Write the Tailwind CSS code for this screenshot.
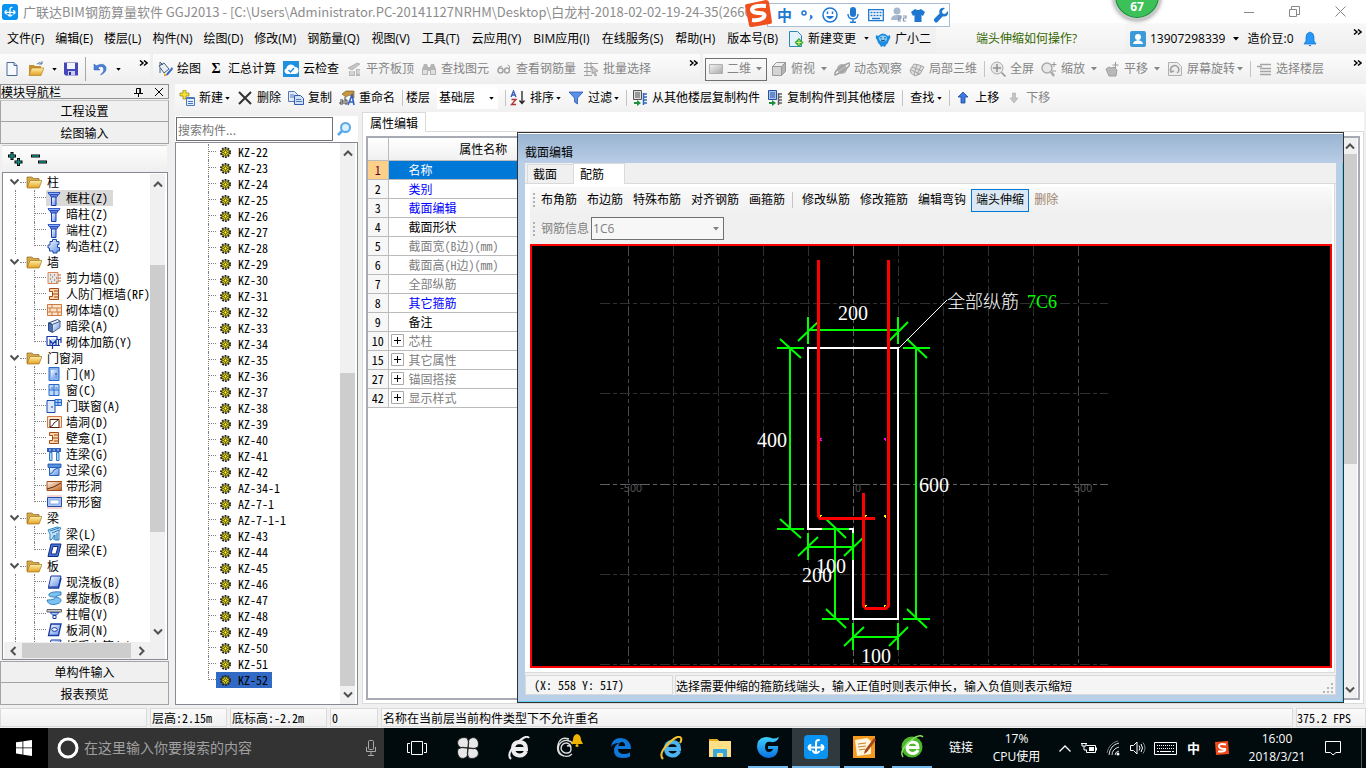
<!DOCTYPE html>
<html lang="zh-CN">
<head>
    <meta charset="UTF-8">
    <title>广联达BIM钢筋算量软件 GGJ2013</title>
    <meta name="viewport" content="width=device-width, initial-scale=1">
    <script src="https://cdn.jsdelivr.net/npm/@tailwindcss/browser@4"></script>
</head>
<body class="h-screen flex flex-col overflow-hidden relative bg-[#f0f0f0] text-black text-xs leading-4 whitespace-nowrap font-['Open_Sans','Noto_Sans_CJK_SC',sans-serif]">

<!-- icon sprites -->
<svg class="absolute w-0 h-0" aria-hidden="true">
    <defs>
        <linearGradient id="gBlue" x1="0" y1="0" x2="1" y2="1"><stop offset="0" stop-color="#fff"/><stop offset="1" stop-color="#5d8fe8"/></linearGradient>
        <linearGradient id="gGold" x1="0" y1="0" x2="0" y2="1"><stop offset="0" stop-color="#fff0a8"/><stop offset="1" stop-color="#e0a020"/></linearGradient>
        <linearGradient id="gBrown" x1="0" y1="0" x2="1" y2="1"><stop offset="0" stop-color="#fff3e4"/><stop offset="1" stop-color="#c06020"/></linearGradient>
        <linearGradient id="gGray" x1="0" y1="0" x2="1" y2="1"><stop offset="0" stop-color="#f4f4f4"/><stop offset="1" stop-color="#a8a8a8"/></linearGradient>
        <linearGradient id="gG" x1="0" y1="0" x2="0" y2="1"><stop offset="0" stop-color="#3fd0ff"/><stop offset="1" stop-color="#0a70e0"/></linearGradient>
    </defs>
    <symbol id="i-logo" viewBox="0 0 24 24"><rect width="24" height="24" rx="4" fill="#0b93f2"/><path d="M12 18V8q0-3 3-3M12 18q-2 0-3-2M4.500 12.500h15M6.500 10q-2 1-2 2.500t2 2.500M17.500 10q2 1 2 2.500t-2 2.500M12 18q2 0 3-1.500" fill="none" stroke="#fff" stroke-width="2" stroke-linecap="round"/></symbol>
    <symbol id="i-down" viewBox="0 0 6 4"><path d="M0 0h6L3 3.500z" fill="currentColor"/></symbol>
    <symbol id="i-more" viewBox="0 0 9 7"><path d="M1 0.500l3 2.500-3 2.500M5 0.500l3 2.500-3 2.500" fill="none" stroke="#000" stroke-width="1.500"/></symbol>
    <symbol id="i-chev" viewBox="0 0 10 8"><path d="M1 1.500l4 4 4-4" fill="none" stroke="#505050" stroke-width="2"/></symbol>
    <symbol id="i-new" viewBox="0 0 16 16"><path d="M3 1.500h7l3 3v10H3z" fill="#f6f9ff" stroke="#4a6a96"/><path d="M10 1.500v3h3" fill="#c7d8f0" stroke="#4a6a96"/></symbol>
    <symbol id="i-open" viewBox="0 0 16 16"><path d="M1 4h5l1 1h6v9H1z" fill="#c89030"/><path d="M3.500 7H16l-3 7.500H1z" fill="url(#gGold)" stroke="#a87818" stroke-width=".6"/><path d="M9 3q3-3 5 0M14 0v3h-3" fill="none" stroke="#5878a8"/></symbol>
    <symbol id="i-save" viewBox="0 0 16 16"><path d="M1 1.500h14v13H2.500L1 13z" fill="#4648b8"/><path d="M4 2h8v6H4z" fill="#f2f4ff"/><path d="M5 10h7v4.500H5z" fill="#c8ccf0"/><path d="M6 11h2v3H6z" fill="#303090"/></symbol>
    <symbol id="i-undo" viewBox="0 0 16 16"><path d="M2 3v6h6L5.800 6.800Q10 4 11.500 7T8.500 14Q15 11 14 6.500 12 1 4.200 4.800z" fill="#4a7fd8" stroke="#2c5cb0" stroke-width=".5"/></symbol>
    <symbol id="i-paint" viewBox="0 0 16 16"><path d="M2 5l5-3 5 6-5 4z" fill="#e8eef8" stroke="#48607c"/><path d="M3 5V1l3 3M3 7v5" fill="none" stroke="#48607c"/><path d="M15 6l-5 6-2 3 3-1 5-6z" fill="#3a68c8"/><path d="M7 12l3 2-3 1.500z" fill="#e8b020"/></symbol>
    <symbol id="i-cloud" viewBox="0 0 16 16"><rect width="16" height="16" fill="#1f8fe0"/><path d="M4 13a3 3 0 0 1-.5-5.800A4.500 4.500 0 0 1 12 6a3.500 3.500 0 0 1 0 7z" fill="#fff"/><path d="M5.500 9l2 2 3.500-4" fill="none" stroke="#1f8fe0" stroke-width="1.400"/></symbol>
    <symbol id="i-flat" viewBox="0 0 16 16"><path d="M2 7l9-5 3 1-8 6z" fill="#c4c4c4" stroke="#a0a0a0" stroke-width=".6"/><path d="M3 10h6v5H3zM10 8h4v7h-4z" fill="#b8b8b8"/><path d="M4 11h4M4 13h4M11 10h3M11 12h3" stroke="#eee"/></symbol>
    <symbol id="i-find" viewBox="0 0 16 16"><path d="M3 3h3l1 3v8H1V8zM10 3h3l2 5v6H9V6z" fill="#b4b4b4"/><path d="M6 6h4v4H6z" fill="#b4b4b4"/><path d="M2 9h4v4H2zM10 9h4v4h-4z" fill="#e0e0e0"/></symbol>
    <symbol id="i-glass" viewBox="0 0 16 16"><circle cx="4.500" cy="9.500" r="2.500" fill="none" stroke="#a4a4a4" stroke-width="1.500"/><circle cx="11" cy="9.500" r="2.500" fill="none" stroke="#a4a4a4" stroke-width="1.500"/><path d="M2 9q0-4 4-4M13.500 9V5l-2-1" fill="none" stroke="#a4a4a4"/></symbol>
    <symbol id="i-batch" viewBox="0 0 16 16"><path d="M1 2.500h14M1 6.500h9M1 10.500h7M1 14.500h8M4 1v14M8 1v8" stroke="#a0a0a0" fill="none"/><path d="M9 5l6 5-3 .5 1.500 4-1.500.5L10.500 11 9 13z" fill="#ccc" stroke="#909090" stroke-width=".7"/></symbol>
    <symbol id="i-rect" viewBox="0 0 16 16"><path d="M1.500 3.500h13v9h-13z" fill="url(#gGray)" stroke="#b0b0b0"/></symbol>
    <symbol id="i-cube" viewBox="0 0 16 16"><path d="M1.500 5.500h9v9h-9z" fill="#d4d4d4" stroke="#999"/><path d="M1.500 5.500l4-4h9l-4 4z" fill="#eee" stroke="#999"/><path d="M10.500 5.500l4-4v9l-4 4z" fill="#b4b4b4" stroke="#999"/></symbol>
    <symbol id="i-orbit" viewBox="0 0 16 16"><circle cx="8" cy="8" r="5" fill="#b4b4b4"/><path d="M1 14Q0 10 7 6t9-4q0 4-7 8T1 14z" fill="none" stroke="#a0a0a0" stroke-width="1.500"/></symbol>
    <symbol id="i-local" viewBox="0 0 16 16"><path d="M1 9l4-6 5 1 5 2-4 7-5 2-4-3z" fill="#e0e0e0" stroke="#a4a4a4"/><path d="M3 6l10 4M2 9l9 4M8 3L5 14M12 5L8 14" stroke="#a4a4a4" fill="none"/></symbol>
    <symbol id="i-full" viewBox="0 0 16 16"><circle cx="7" cy="7" r="6" fill="#e8e8e8" stroke="#aaa"/><path d="M7 3v8M3 7h8M11.500 11.500l4 4" stroke="#909090" stroke-width="1.500"/></symbol>
    <symbol id="i-zoom" viewBox="0 0 16 16"><circle cx="6" cy="7" r="5" fill="#e8e8e8" stroke="#aaa" stroke-width="1.500"/><path d="M10 11l3 4" stroke="#aaa" stroke-width="2.500"/><path d="M13 1v5M10.500 3.500h5M11 10h4" stroke="#999"/></symbol>
    <symbol id="i-pan" viewBox="0 0 16 16"><path d="M2 8l3-2 2 1 3-1 3 3-1 6H5z" fill="#b8b8b8" stroke="#a0a0a0"/><path d="M11.500 1v6M8.500 4h6" stroke="#999"/></symbol>
    <symbol id="i-spin" viewBox="0 0 16 16"><path d="M1.500 1.500h9l4 4v9h-13z" fill="#eee" stroke="#b0b0b0"/><path d="M4 10a4 4 0 1 1 6 2M3 8l1 3 3-1" fill="none" stroke="#a0a0a0" stroke-width="1.500"/></symbol>
    <symbol id="i-floor" viewBox="0 0 16 16"><path d="M4 3.500h11M4 7.500h11M4 10.500h11M4 13.500h11M1 5.500h5" stroke="#a4a4a4" stroke-width="1.600"/></symbol>
    <symbol id="i-add" viewBox="0 0 16 16"><path d="M4 0h3v3h3v3H7v3H4V6H1V3h3z" fill="#f4e030" stroke="#807010" stroke-width=".6"/><path d="M7.500 7.500h8v8h-8z" fill="#e4eefc" stroke="#4878c0"/><path d="M7.500 8.500h8M9 11.500h5M9 13.500h5" stroke="#4878c0"/></symbol>
    <symbol id="i-x" viewBox="0 0 16 16"><path d="M2 2l12 12M14 2L2 14" stroke="#333" stroke-width="2"/></symbol>
    <symbol id="i-copy" viewBox="0 0 16 16"><path d="M.5 1.500h6l3 3v7h-9z" fill="#dfeafa" stroke="#5878b0"/><path d="M6.500 5.500h6l3 3v6h-9z" fill="#cfe0fa" stroke="#3058b0"/><path d="M2 5h4M2 7h4M8 9.500h5M8 11.500h6" stroke="#5878b0"/></symbol>
    <symbol id="i-ren" viewBox="0 0 16 16"><path d="M3 4l4-3h8v7l-5-3-3 2z" fill="#c89840" stroke="#705010" stroke-width=".6"/><path d="M9 15l4-10 2 10M10 12h5" stroke="#3060c0" stroke-width="1.600" fill="none"/><path d="M1 10h3v4H1v-2h3M6 7v7h2v-4H6" stroke="#444" fill="none"/></symbol>
    <symbol id="i-sort" viewBox="0 0 16 16"><path d="M1 7l2.500-6L6 7M2 5h3" stroke="#3858b8" stroke-width="1.300" fill="none"/><path d="M1.500 9.500H6L1.500 14.500H6" stroke="#b03030" stroke-width="1.300" fill="none"/><path d="M12 1v12M9.500 10.500L12 13.500l2.500-3" stroke="#222" stroke-width="1.300" fill="none"/></symbol>
    <symbol id="i-filter" viewBox="0 0 16 16"><path d="M1 2h14L9.500 8v6L6.500 12V8z" fill="#5a90e8" stroke="#2858b0" stroke-width=".8"/></symbol>
    <symbol id="i-from" viewBox="0 0 16 16"><path d="M1.500.5h8v9h-8z" fill="#ddd" stroke="#555"/><path d="M3 3h5M3 5h5M3 7h5" stroke="#555"/><path d="M11 4h4M11 7h4M11 10h4M11 13h4M11.500 3v12" stroke="#3068b8" stroke-width="1.500"/><path d="M2 12h3V10l4 3-4 3v-2H2z" fill="#209040"/></symbol>
    <symbol id="i-to" viewBox="0 0 16 16"><path d="M1.500.5h8v9h-8z" fill="#a8c4f0" stroke="#2850a0"/><path d="M3 3h5M3 5h5M3 7h5" stroke="#2850a0"/><path d="M11 4h4M11 7h4M11 10h4M11 13h4M11.500 3v12" stroke="#606060" stroke-width="1.500"/><path d="M2 12h3V10l4 3-4 3v-2H2z" fill="#209040"/></symbol>
    <symbol id="i-up" viewBox="0 0 16 16"><path d="M8 2l5 5h-3v6H6V7H3z" fill="#3c78e0" stroke="#1c48a0" stroke-width=".8"/></symbol>
    <symbol id="i-dn" viewBox="0 0 16 16"><path d="M8 13l4-5H9.500V3h-3v5H4z" fill="#c4c4c4" stroke="#aaa" stroke-width=".6"/></symbol>
    <symbol id="i-doc" viewBox="0 0 16 16"><path d="M1.500.5h8l4 4v11h-12z" fill="#e4f2fc" stroke="#2888b8"/><path d="M11 7l4.500 4.500L11 16l-4.500-4.500z" fill="#38a838"/><path d="M11 9v5M8.500 11.500h5" stroke="#d8f080"/></symbol>
    <symbol id="i-bot" viewBox="0 0 16 16"><path d="M1 4l2 1Q8 0 13 5l2-1q1 3-1 5-1 4-3 5l-1 2-2-1-2 1-1-2Q3 13 2 9 0 7 1 4z" fill="#1c8ce0"/><ellipse cx="8" cy="7.500" rx="4" ry="3" fill="#8ccffc"/><path d="M6 6v1.500M10 6v1.500M6 9q2 1.500 4 0" stroke="#104878" fill="none"/></symbol>
    <symbol id="i-user" viewBox="0 0 16 16"><rect width="16" height="16" rx="2" fill="#3c9ad8"/><circle cx="8" cy="6" r="3" fill="#fff"/><path d="M3 13q0-3 5-4 5 1 5 4z" fill="#fff"/></symbol>
    <symbol id="i-bell" viewBox="0 0 16 16"><path d="M8 1q4 1 4 5v4l2 3H2l2-3V6q0-4 4-5z" fill="#2898f8" stroke="#1070d0" stroke-width=".7"/><path d="M6.500 14h3L8 15.500z" fill="#1070d0"/></symbol>
    <symbol id="i-mag" viewBox="0 0 16 16"><circle cx="9.500" cy="6.500" r="4.500" fill="#d8f0ff" stroke="#58a8e8" stroke-width="2"/><path d="M6 10l-4 4" stroke="#58a8e8" stroke-width="2.500"/></symbol>
    <symbol id="i-gear" viewBox="0 0 12 12"><circle cx="6" cy="6" r="5" fill="none" stroke="#222" stroke-width="2" stroke-dasharray="2 1.140"/><circle cx="6" cy="6" r="4" fill="#f8f000" stroke="#222" stroke-width=".7"/><path d="M6 2v8M2 6h8M3 3l6 6M9 3L3 9" stroke="#222" stroke-width=".6"/><circle cx="6" cy="6" r="1.800" fill="#f8f000" stroke="#222" stroke-width=".8"/></symbol>
    <!-- tree icons -->
    <symbol id="t-folder" viewBox="0 0 16 14"><path d="M1 2h5l1.500 1.500H13V12H1z" fill="#d8a848" stroke="#8c6820" stroke-width=".7"/><path d="M4 5.500h12L13 13H1z" fill="url(#gGold)" stroke="#a07820" stroke-width=".7"/></symbol>
    <symbol id="t-col" viewBox="0 0 16 16"><path d="M2 2.500h12l-1 2H3zM4 5h8l-1 2H5z" fill="#8ab4f4" stroke="#1838b8" stroke-width=".8"/><path d="M5.500 7h4.500v8.500H5.500z" fill="url(#gBlue)" stroke="#1838b8"/></symbol>
    <symbol id="t-puz" viewBox="0 0 16 16"><path d="M4 3.500h2.500V1.500h4V3.500H13v3h-1.500v3H13.500v3.500H11v2H7v-2H3.500v-3H2v-3h2z" fill="url(#gBlue)" stroke="#1848a8"/></symbol>
    <symbol id="t-wall" viewBox="0 0 16 16"><path d="M2 2.500h10v11H2z" fill="#e8e4e0" stroke="#d88858"/><path d="M4 5h1M8 5h1M6 7h1M10 8h1M4 9h1M8 10h1M5 12h1M10 12h1" stroke="#555"/><path d="M12 5h3M12 8h3M12 11h3" stroke="#c06030"/></symbol>
    <symbol id="t-ibar" viewBox="0 0 16 16"><path d="M3.500 2.500h9v11h-9v-3h3v-5h-3z" fill="#fad8b0" stroke="#a84810"/><path d="M6 8h6M8 5h4M8 11h4" stroke="#a84810"/></symbol>
    <symbol id="t-brick" viewBox="0 0 16 16"><path d="M1.500 2.500h14v11h-14zM1.500 6h14M1.500 10h14M6 2.500V6M11 6v4M6 10v3.500M4 6v4M12 10v3.500" fill="#fbe6cc" stroke="#d07840"/></symbol>
    <symbol id="t-prism" viewBox="0 0 16 16"><path d="M2.500 5l9-3.500 3 2-8 3z" fill="#e8f0ff" stroke="#304878"/><path d="M2.500 5l4 1.500v8l-4-2z" fill="#4870b8" stroke="#304878"/><path d="M6.500 6.500l7.500-3v6l-7.500 5z" fill="url(#gBlue)" stroke="#506890"/></symbol>
    <symbol id="t-rebar" viewBox="0 0 16 16"><path d="M5 5h6v6H5z" fill="#c0d8fa"/><path d="M1 11.500v-9h10v3h4.500M15 3v6M1 11.500h13M6.500 15V9.500L4 6.500v5M6.500 10L10 6.500V11M12.500 5v6" fill="none" stroke="#1838a8" stroke-width="1.200"/></symbol>
    <symbol id="t-door" viewBox="0 0 16 16"><path d="M3 1.500h10v13H3z" fill="#8ab4f0" stroke="#2868c8"/><path d="M5 4h6v8H5z" fill="url(#gBlue)"/><path d="M10 7v2" stroke="#103888"/></symbol>
    <symbol id="t-win" viewBox="0 0 16 16"><path d="M3 2.500h10v11H3z" fill="#bcd8fa" stroke="#2868c8"/><path d="M8 2v12M3 8h10" stroke="#2868c8"/><path d="M5 6h2M9.500 6h2" stroke="#2868c8"/></symbol>
    <symbol id="t-dw" viewBox="0 0 16 16"><path d="M1 2.500h8v12H1z" fill="#dbe9ff" stroke="#1848a8"/><path d="M9 1.500h6.500v6H9zM12 1.500v6M9 4.500h6" fill="#a8ccf8" stroke="#2868c8"/><path d="M6 8v2" stroke="#103888"/></symbol>
    <symbol id="t-hole" viewBox="0 0 16 16"><path d="M1.500 2.500h14v11h-14z" fill="#fbe6cc" stroke="#d07840"/><path d="M4 5.500h9v8H4z" fill="#fff" stroke="#502010"/><path d="M4 13q3-1 4-4l4-3" stroke="#502010" fill="none"/></symbol>
    <symbol id="t-beam" viewBox="0 0 16 16"><path d="M1 2h14v4H1z" fill="#3060b8"/><path d="M3 4h2M7 4h2M11 4h2" stroke="#cfe0ff"/><path d="M3.500 6.500h2.500v8H3.500zM10.500 6.500H13v8h-2.500z" fill="#b8d8fa" stroke="#3078c8"/></symbol>
    <symbol id="t-lint" viewBox="0 0 16 16"><path d="M2 2h13v3.500H2z" fill="#5890e0" stroke="#1848a8" stroke-width=".8"/><path d="M3.500 5.500h9.500v8H3.500z" fill="url(#gBlue)" stroke="#2060b8"/><path d="M4 12q3-1 4-4l4-2" stroke="#2060b8" fill="none"/></symbol>
    <symbol id="t-band" viewBox="0 0 16 16"><path d="M1 3.500h15v9H1z" fill="url(#gBrown)" stroke="#a05020"/><path d="M1 11q6-1 14-6" stroke="#602808" fill="none"/></symbol>
    <symbol id="t-bwin" viewBox="0 0 16 16"><path d="M1 2h15M1 14h15" stroke="#f0b0a0"/><path d="M1.500 3.500h14v9h-14z" fill="#a8c8f4" stroke="#2848a8"/><path d="M4 6h9v4H4z" fill="#fff" stroke="#6890d8" stroke-width=".7"/></symbol>
    <symbol id="t-liang" viewBox="0 0 16 16"><path d="M2 4l9-3 4 1-2 3v9H9V9L5 14H4V8z" fill="#c4e0f8" stroke="#2888c0"/><path d="M4 5l9-3M6 7l7-3M8 9v5M11 7v7" stroke="#2878b8" fill="none"/></symbol>
    <symbol id="t-ring" viewBox="0 0 16 16"><path d="M5 2h10l-3 12.500H2z" fill="#4878d0" stroke="#102888"/><path d="M7 4.500h5l-2 7.500H5z" fill="#fff" stroke="#102888"/></symbol>
    <symbol id="t-slab" viewBox="0 0 16 16"><path d="M5 2h10l-2.500 11H2.500z" fill="url(#gBlue)" stroke="#1838a0"/><path d="M2 14h10.500L15 4" fill="none" stroke="#1838a0" stroke-width="1.500"/></symbol>
    <symbol id="t-spir" viewBox="0 0 16 16"><path d="M15 2Q6 1 3 4q-1 3 4 3 4 0 1 2-3 1-7 1 1 5 7 4.500 7-1 7-4T9.500 7Q12 5 15 5z" fill="#7cc0f0" stroke="#1870b8" stroke-width=".8"/></symbol>
    <symbol id="t-cap" viewBox="0 0 16 16"><path d="M1 3.500h14.500v2.500H1z" fill="#ccc" stroke="#666"/><path d="M4 6.500h9l-2.500 2.500h-4z" fill="#a8c4f0" stroke="#3058b0"/><path d="M7 9.500h3v3H7z" fill="#fff" stroke="#1838a8"/></symbol>
    <symbol id="t-shole" viewBox="0 0 16 16"><path d="M5 2h10l-2.500 11.500H2.500z" fill="url(#gBlue)" stroke="#1838a0" stroke-width="1.300"/><ellipse cx="8.500" cy="7.500" rx="2.800" ry="1.800" fill="#fff" stroke="#1838a0"/></symbol>
</svg>

<!-- title bar -->
<header class="h-[23px] shrink-0 bg-white flex items-center pl-[2px] text-[#8c8c8c]">
    <svg class="size-4 shrink-0"><use href="#i-logo"/></svg>
    <h1 class="ml-[5px] text-[13px] font-['Noto_Sans_CJK_SC',sans-serif]">广联达BIM钢筋算量软件 GGJ2013 - [C:\Users\Administrator.PC-20141127NRHM\Desktop\白龙村-2018-02-02-19-24-35(2666版</h1>
    <div class="ml-auto flex items-center gap-[35px] pr-5 shrink-0">
        <button aria-label="最小化"><svg class="w-[10px] h-[10px]" viewBox="0 0 10 10"><path d="M0 5.500h10" stroke="#888"/></svg></button>
        <button aria-label="还原"><svg class="w-[11px] h-[11px]" viewBox="0 0 11 11"><path d="M.5 3.500h7v7h-7zM2.500 3V.5h8v8H8" fill="none" stroke="#888"/></svg></button>
        <button aria-label="关闭"><svg class="w-[11px] h-[11px]" viewBox="0 0 11 11"><path d="M.5.5l10 10M10.500.5l-10 10" stroke="#888"/></svg></button>
    </div>
</header>

<!-- menu bar -->
<nav class="h-[31px] shrink-0 flex items-center bg-linear-to-b from-[#f2f2f2] to-[#efefef]">
    <div class="flex items-center gap-3 pl-[7px] w-[788px] shrink-0">
        <div class="flex items-center gap-[11px]">
            <button>文件(F)</button><button>编辑(E)</button><button>楼层(L)</button><button>构件(N)</button><button>绘图(D)</button><button>修改(M)</button><button>钢筋量(Q)</button>
        </div>
        <button>视图(V)</button><button>工具(T)</button><button>云应用(Y)</button><button>BIM应用(I)</button><button>在线服务(S)</button><button>帮助(H)</button><button>版本号(B)</button>
    </div>
    <button class="flex items-center gap-1 shrink-0"><svg class="size-4"><use href="#i-doc"/></svg>新建变更<svg class="w-[5px] h-[3px] ml-1"><use href="#i-down"/></svg></button>
    <button class="flex items-center gap-1 ml-[6px] shrink-0"><svg class="size-4"><use href="#i-bot"/></svg>广小二</button>
    <div class="flex-1 h-full ml-[5px] bg-linear-to-b from-[#fafafa] to-[#f0f0f0] flex items-center">
        <a href="#" class="ml-10 text-[#336600]">端头伸缩如何操作?</a>
        <div class="ml-auto w-[241px] h-[29px] bg-linear-to-b from-[#f7f7f7] to-[#eeeeee] flex items-center pl-[5px]">
            <svg class="size-4"><use href="#i-user"/></svg>
            <button class="ml-1 flex items-center gap-2">13907298339<svg class="w-[6px] h-[4px]"><use href="#i-down"/></svg></button>
            <button class="ml-2">造价豆:0</button>
            <svg class="size-4 ml-2"><use href="#i-bell"/></svg>
            <svg class="w-[9px] h-[7px] ml-auto mr-1 mb-3"><use href="#i-more"/></svg>
        </div>
    </div>
</nav>

<!-- main toolbar -->
<div class="h-[30px] shrink-0 flex text-[#858585]">
    <div class="w-[150px] shrink-0 mr-[3px] flex items-center pl-1 bg-linear-to-b from-[#fcfcfc] to-[#eeeeee] text-black">
        <button aria-label="新建"><svg class="size-4"><use href="#i-new"/></svg></button>
        <button aria-label="打开" class="ml-2 flex items-center gap-2"><svg class="size-4"><use href="#i-open"/></svg><svg class="w-[5px] h-[3px]"><use href="#i-down"/></svg></button>
        <button aria-label="保存" class="ml-[6px]"><svg class="size-4"><use href="#i-save"/></svg></button>
        <span class="w-px h-6 bg-[#a8a8a8] mx-[6px]"></span>
        <button aria-label="撤销" class="flex items-center gap-2"><svg class="size-4"><use href="#i-undo"/></svg><svg class="w-[5px] h-[3px]"><use href="#i-down"/></svg></button>
        <svg class="w-[9px] h-[7px] ml-auto mr-[2px] mb-3"><use href="#i-more"/></svg>
    </div>
    <div class="w-[547px] shrink-0 mr-[3px] flex items-center gap-[7px] pl-1 bg-linear-to-b from-[#fcfcfc] to-[#eeeeee]">
        <button class="flex items-center gap-1 text-black"><svg class="size-4"><use href="#i-paint"/></svg>绘图</button>
        <button class="flex items-center gap-1 text-black"><span class="w-4 text-center text-sm font-bold font-['Liberation_Serif',serif]">Σ</span>汇总计算</button>
        <button class="flex items-center gap-1 text-black"><svg class="size-4"><use href="#i-cloud"/></svg>云检查</button>
        <button class="flex items-center gap-1"><svg class="size-4"><use href="#i-flat"/></svg>平齐板顶</button>
        <button class="flex items-center gap-1"><svg class="size-4"><use href="#i-find"/></svg>查找图元</button>
        <button class="flex items-center gap-1"><svg class="size-4"><use href="#i-glass"/></svg>查看钢筋量</button>
        <button class="flex items-center gap-1"><svg class="size-4"><use href="#i-batch"/></svg>批量选择</button>
        <svg class="w-[9px] h-[7px] ml-auto mr-[2px] mb-3"><use href="#i-more"/></svg>
    </div>
    <div class="flex-1 flex items-center gap-[7px] pl-[2px] bg-linear-to-b from-[#fcfcfc] to-[#eeeeee]">
        <label class="relative flex items-center w-[62px] h-[23px] shrink-0 border border-[#707070] pl-[2px]">
            <svg class="size-4 shrink-0"><use href="#i-rect"/></svg>
            <select aria-label="视图模式" class="appearance-none w-full pl-[3px] outline-none"><option>二维</option></select>
            <svg class="absolute right-1 w-[6px] h-[4px]"><use href="#i-down"/></svg>
        </label>
        <button class="-ml-[3px] flex items-center gap-1"><svg class="size-4"><use href="#i-cube"/></svg>俯视<svg class="w-[6px] h-[4px] ml-[2px]"><use href="#i-down"/></svg></button>
        <button class="flex items-center gap-1"><svg class="size-4"><use href="#i-orbit"/></svg>动态观察</button>
        <button class="flex items-center gap-1"><svg class="size-4"><use href="#i-local"/></svg>局部三维</button>
        <span class="w-px h-4 bg-[#c4c4c4]"></span>
        <button class="-ml-[2px] flex items-center gap-1"><svg class="size-4"><use href="#i-full"/></svg>全屏</button>
        <button class="flex items-center gap-1"><svg class="size-4"><use href="#i-zoom"/></svg>缩放<svg class="w-[6px] h-[4px] ml-[2px]"><use href="#i-down"/></svg></button>
        <button class="flex items-center gap-1"><svg class="size-4"><use href="#i-pan"/></svg>平移<svg class="w-[6px] h-[4px] ml-[2px]"><use href="#i-down"/></svg></button>
        <button class="flex items-center gap-1"><svg class="size-4"><use href="#i-spin"/></svg>屏幕旋转<svg class="w-[6px] h-[4px] -ml-[2px]"><use href="#i-down"/></svg></button>
        <span class="w-px h-4 bg-[#c4c4c4]"></span>
        <button class="-ml-[2px] flex items-center gap-1"><svg class="size-4"><use href="#i-floor"/></svg>选择楼层</button>
        <svg class="w-[9px] h-[7px] ml-auto mr-1 mb-3"><use href="#i-more"/></svg>
    </div>
</div>

<main class="flex-1 min-h-0 flex font-['Noto_Sans_CJK_SC',sans-serif]">
    <!-- module navigation -->
    <aside class="w-[170px] shrink-0 flex flex-col pr-px">
        <div class="h-[15px] shrink-0 border border-[#909090] flex items-center">
            <h2>模块导航栏</h2>
            <button aria-label="固定" class="ml-auto"><svg class="w-[9px] h-[10px]" viewBox="0 0 9 10"><path d="M2.500 6V1.500h4V6M0 6.500h9M4.500 7v3M5.800 1v5" fill="none" stroke="#000"/></svg></button>
            <button aria-label="关闭" class="ml-3 mr-[5px]"><svg class="w-2 h-2" viewBox="0 0 8 8"><path d="M0 0l8 8M8 0L0 8" stroke="#000"/></svg></button>
        </div>
        <button class="h-[22px] mt-px shrink-0 border border-[#a4a4a4] border-t-[#c8c8c8]">工程设置</button>
        <button class="h-[22px] shrink-0 border border-t-0 border-[#a4a4a4]">绘图输入</button>
        <div class="h-[27px] mt-px mx-[2px] shrink-0 flex items-center gap-2 pl-[5px] bg-linear-to-b from-[#fdfdfd] to-[#efefef] border-t border-[#c8c8c8]">
            <button aria-label="全部展开"><svg class="size-4" viewBox="0 0 16 16"><path d="M5 1v8M1 5h8M11.500 7v8M7.500 11h8" stroke="#000" stroke-width="3"/><path d="M5 2v6M2 5h6M11.500 8v6M8.500 11h6" stroke="#109088" stroke-width="1.400"/></svg></button>
            <button aria-label="全部折叠"><svg class="size-4" viewBox="0 0 16 16"><path d="M0 5h9M7 11h9" stroke="#000" stroke-width="3"/><path d="M1 5h7M8 11h7" stroke="#109088" stroke-width="1.400"/></svg></button>
        </div>
        <div class="flex-1 min-h-0 ml-[2px] mr-px border border-[#868a92] bg-white flex flex-col pl-px pr-[2px]">
            <div class="flex-1 min-h-0 flex">
                <ul id="moduleTree" class="flex-1 min-w-0 overflow-hidden pt-px [font-feature-settings:'hwid']"></ul>
                <div class="w-[15px] shrink-0 mt-px flex flex-col items-center bg-[#f0f0f0]">
                    <svg class="w-[10px] h-2 my-[6px] rotate-180 shrink-0"><use href="#i-chev"/></svg>
                    <span class="mt-[71px] w-full h-[267px] shrink-0 bg-[#cdcdcd]"></span>
                    <svg class="w-[10px] h-2 my-[6px] mt-auto shrink-0"><use href="#i-chev"/></svg>
                </div>
            </div>
            <div class="h-[17px] shrink-0 flex items-center bg-[#f0f0f0]">
                <svg class="w-[10px] h-2 mx-1 rotate-90"><use href="#i-chev"/></svg>
                <span class="h-[15px] w-[109px] bg-[#cdcdcd]"></span>
                <svg class="w-[10px] h-2 mx-[6px] -rotate-90"><use href="#i-chev"/></svg>
            </div>
        </div>
        <button class="h-[22px] mt-px shrink-0 border border-[#a4a4a4]">单构件输入</button>
        <button class="h-[22px] shrink-0 border border-t-0 border-[#a4a4a4]">报表预览</button>
    </aside>

    <section class="flex-1 min-w-0 flex flex-col pl-[5px]">
        <!-- component toolbar -->
        <div class="h-7 shrink-0 flex items-center gap-[7px] pl-1 bg-linear-to-b from-[#fdfdfd] to-[#f1f1f1] font-['Open_Sans','Noto_Sans_CJK_SC',sans-serif]">
            <button class="flex items-center gap-1"><svg class="size-4"><use href="#i-add"/></svg>新建<svg class="w-[5px] h-[3px] -ml-[2px]"><use href="#i-down"/></svg></button>
            <button class="flex items-center gap-1"><svg class="size-4"><use href="#i-x"/></svg>删除</button>
            <button class="flex items-center gap-1"><svg class="size-4"><use href="#i-copy"/></svg>复制</button>
            <button class="flex items-center gap-1"><svg class="size-4"><use href="#i-ren"/></svg>重命名</button>
            <span class="w-px h-4 bg-[#c4c4c4] -mr-1"></span>
            <label for="floorSel">楼层</label>
            <span class="relative flex items-center w-[61px] h-[22px] bg-white">
                <select id="floorSel" class="appearance-none w-full pl-[2px] outline-none"><option>基础层</option></select>
                <svg class="absolute right-1 w-[5px] h-[3px]"><use href="#i-down"/></svg>
            </span>
            <span class="w-px h-4 bg-[#c4c4c4] -mr-[3px]"></span>
            <button class="flex items-center gap-1"><svg class="size-4"><use href="#i-sort"/></svg>排序<svg class="w-[5px] h-[3px] -ml-[2px]"><use href="#i-down"/></svg></button>
            <button class="flex items-center gap-1"><svg class="size-4"><use href="#i-filter"/></svg>过滤<svg class="w-[5px] h-[3px] -ml-[2px]"><use href="#i-down"/></svg></button>
            <span class="w-px h-4 bg-[#c4c4c4] -mr-[2px]"></span>
            <button class="flex items-center gap-1"><svg class="size-4"><use href="#i-from"/></svg>从其他楼层复制构件</button>
            <button class="flex items-center gap-1"><svg class="size-4"><use href="#i-to"/></svg>复制构件到其他楼层</button>
            <span class="w-px h-4 bg-[#c4c4c4]"></span>
            <button class="flex items-center gap-[3px]">查找<svg class="w-[5px] h-[3px]"><use href="#i-down"/></svg></button>
            <span class="w-px h-4 bg-[#c4c4c4] -mr-[2px]"></span>
            <button class="flex items-center gap-1"><svg class="size-4"><use href="#i-up"/></svg>上移</button>
            <button class="flex items-center gap-1 text-[#858585]"><svg class="size-4"><use href="#i-dn"/></svg>下移</button>
        </div>

        <div class="flex-1 min-h-0 flex gap-1">
            <!-- component list -->
            <div class="w-[183px] shrink-0 flex flex-col">
                <div class="h-[30px] shrink-0 flex items-center bg-white pl-px border-t-4 border-[#f0f0f0]">
                    <input type="text" aria-label="搜索构件" placeholder="搜索构件..." class="w-[157px] h-6 border border-[#707070] px-px placeholder-[#777] outline-none">
                    <button aria-label="搜索" class="ml-[3px]"><svg class="size-4"><use href="#i-mag"/></svg></button>
                </div>
                <div class="flex-1 min-h-0 border border-[#868a92] bg-white flex">
                    <ul id="componentList" class="flex-1 pt-px pl-8 [font-feature-settings:'hwid']"></ul>
                    <div class="w-[15px] mr-[2px] shrink-0 flex flex-col items-center bg-[#f0f0f0]">
                        <svg class="w-[10px] h-2 my-[6px] rotate-180 shrink-0"><use href="#i-chev"/></svg>
                        <span class="mt-auto w-full h-[313px] shrink-0 bg-[#cdcdcd]"></span>
                        <svg class="w-[10px] h-2 my-[5px] shrink-0"><use href="#i-chev"/></svg>
                    </div>
                </div>
            </div>

            <!-- property editor -->
            <div class="flex-1 min-w-0 relative flex flex-col mr-[2px] mb-px">
                <div class="h-5 shrink-0 flex bg-white">
                    <button class="w-[64px] border border-b-0 border-[#dadada] bg-white">属性编辑</button>
                    <span class="flex-1 border-b border-[#dadada]"></span>
                </div>
                <div class="flex-1 min-h-0 flex border border-t-0 border-[#dadada] bg-white p-[3px] pt-1">
                    <div class="flex-1 flex border-2 border-[#a8aab4] bg-white">
                        <div class="flex-1 [font-feature-settings:'hwid']">
                            <table class="w-[210px] border-collapse table-fixed">
                                <thead>
                                    <tr class="h-[22px]"><th class="w-[20px] border-r border-b border-[#bbb] bg-linear-to-b from-white to-[#f0f0f0]"></th><th class="font-normal border-b border-[#bbb] bg-linear-to-b from-white to-[#f0f0f0]">属性名称</th></tr>
                                </thead>
                                <tbody id="propRows"></tbody>
                            </table>
                        </div>
                        <div class="w-[14px] mr-px shrink-0 flex flex-col items-center bg-[#f0f0f0]">
                            <svg class="w-[10px] h-2 my-1 rotate-180 shrink-0"><use href="#i-chev"/></svg>
                            <span class="w-full h-[310px] shrink-0 bg-[#cdcdcd]"></span>
                            <svg class="w-[10px] h-2 mt-auto mb-1 shrink-0"><use href="#i-chev"/></svg>
                        </div>
                    </div>
                </div>

                <!-- section editor dialog -->
                <div role="dialog" aria-label="截面编辑" class="absolute left-[155px] right-[20px] top-5 bottom-px flex flex-col border border-[#333] bg-[#b9cfe8] px-[7px] pb-[7px] shadow-[inset_-1px_-1px_0_#5fd0f0]">
                    <h2 class="h-[30px] -mx-[7px] px-[7px] shrink-0 pt-[10px] border-t border-white bg-linear-to-b from-[#99b4d1] to-[#b9cde6]">截面编辑</h2>
                    <div class="flex-1 min-h-0 flex flex-col bg-[#f0f0f0]">
                        <div class="h-[21px] shrink-0 flex items-end pl-[2px] border-b border-[#dadada]">
                            <button class="w-[46px] h-[19px] pl-[5px] text-left bg-[#f0f0f0] border-l border-t border-[#dadada]">截面</button>
                            <button class="w-[52px] h-[21px] -mb-px pl-[6px] text-left bg-white border border-b-0 border-[#dadada]">配筋</button>
                        </div>
                        <div class="flex-1 min-h-0 flex flex-col bg-white pl-[5px] pr-[2px] pt-[3px] pb-1 mr-px border-r border-b border-[#dadada] font-['Open_Sans','Noto_Sans_CJK_SC',sans-serif]">
                            <div class="h-[26px] shrink-0 flex items-center gap-[10px] bg-linear-to-b from-[#fafafa] to-[#f0f0f0] pl-[3px]">
                                <span class="h-[14px] border-l-2 border-dotted border-[#b0b0b0] -mr-1"></span>
                                <button>布角筋</button><button>布边筋</button><button>特殊布筋</button><button>对齐钢筋</button><button>画箍筋</button>
                                <span class="w-px h-4 bg-[#c4c4c4] -mx-[3px]"></span>
                                <button class="ml-[2px]">修改纵筋</button><button>修改箍筋</button><button>编辑弯钩</button>
                                <button class="w-[58px] h-[23px] -mx-[5px] border border-[#0078d7] bg-[#dce9f5]">端头伸缩</button>
                                <button class="text-[#a0826a]">删除</button>
                            </div>
                            <div class="h-[31px] shrink-0 flex items-center gap-[2px] bg-[#f0f0f0] pl-[3px] text-[#808080]">
                                <span class="h-[14px] border-l-2 border-dotted border-[#b0b0b0] mr-1"></span>
                                <label for="barInfo">钢筋信息</label>
                                <span class="relative flex items-center w-[133px] h-[23px] border border-[#707070] bg-[#f7f7f7]">
                                    <select id="barInfo" class="appearance-none w-full pl-px outline-none"><option>1C6</option></select>
                                    <svg class="absolute right-1 w-[6px] h-[4px]"><use href="#i-down"/></svg>
                                </span>
                            </div>
                            <div class="flex-1 min-h-0 border-2 border-[#ff0000] bg-black">
                                <svg class="block w-full h-full" viewBox="532 246 798 420" preserveAspectRatio="xMinYMin meet" fill="none">
                                    <g id="gridLines" shape-rendering="crispEdges"></g>
                                    <g fill="#555" font-size="11" font-family="Noto Sans CJK SC"><text x="620" y="492">-500</text><text x="855" y="492">0</text><text x="1074" y="492">500</text></g>
                                    <path d="M808 348H898V619H853V529H808Z" stroke="#fff" stroke-width="2" shape-rendering="crispEdges"/>
                                    <g stroke="#00ff00" stroke-width="2">
                                        <path shape-rendering="crispEdges" d="M808 330H898M808 317V344M898 317V344M790 348V529M777 348H804M777 529H804M916 348V619M903 348H930M903 619H930M835 529V619M822 529H849M822 619H849M808 547H853M808 533V560M853 533V560M853 637H898M853 623V650M898 623V650"/>
                                        <path d="M798 341L818 322M889 341L908 322M780 339L801 358M780 519L801 538M907 339L927 358M907 609L927 628M826 519L846 538M826 609L846 628M798 556L818 537M844 556L864 537M844 646L864 627M889 646L908 627"/>
                                    </g>
                                    <g stroke="#ff0000" stroke-width="3">
                                        <path d="M818.500 260V516L820 518.500H875"/>
                                        <path d="M888.500 260V606L886 608.500H866L863.500 606V493"/>
                                    </g>
                                    <g shape-rendering="crispEdges">
                                        <path d="M820 438h2v1h-1v1h1v1h-2zM884 438h2v3h-1v-1h-1z" fill="#ff00ff"/>
                                        <path d="M820 515h2v1h-1v1h-1zM865 515h2v1h-1v1h-1zM884 515h2v3h-1v-1h-1zM865 605h2v1h-1v1h-1zM884 605h2v1h-1v1h-1z" fill="#ffff00"/>
                                    </g>
                                    <path d="M899 348L947 300" stroke="#fff"/>
                                    <g fill="#fff" font-size="20" font-family="Liberation Serif, serif">
                                        <text x="838" y="320">200</text><text x="757" y="447">400</text><text x="919" y="492">600</text><text x="816" y="573">100</text><text x="802" y="582">200</text><text x="861" y="663">100</text>
                                    </g>
                                    <text x="947" y="308" fill="#fff" font-size="18" font-family="Noto Sans CJK SC, sans-serif" font-weight="300">全部纵筋</text>
                                    <text x="1027" y="308" fill="#00ff00" font-size="18" font-family="Liberation Serif, serif">7C6</text>
                                </svg>
                            </div>
                        </div>
                        <div class="h-[22px] shrink-0 pt-[2px] flex gap-[2px] leading-[17px] font-['Noto_Sans_CJK_SC',sans-serif]">
                            <span class="w-[148px] border border-[#dadada] bg-[#f5f5f5] pl-2 [font-feature-settings:'hwid']">(X: 558 Y: 517)</span>
                            <span class="flex-1 flex items-end border border-[#dadada] bg-[#f5f5f5]">选择需要伸缩的箍筋线端头，输入正值时则表示伸长，输入负值则表示缩短
                                <svg class="size-3 ml-auto" viewBox="0 0 12 12"><path d="M8 2h2M4 6h2M8 6h2M0 10h2M4 10h2M8 10h2" stroke="#b8b8b8" stroke-width="2"/></svg>
                            </span>
                        </div>
                    </div>
                </div>
            </div>
        </div>
    </section>
</main>

<!-- status bar -->
<div class="h-[23px] shrink-0 pt-[3px] pb-px flex gap-[3px] leading-[17px] font-['Noto_Sans_CJK_SC',sans-serif] [font-feature-settings:'hwid']">
    <span class="w-[147px] border border-[#dadada] bg-linear-to-b from-[#fbfbfb] to-[#f0f0f0]"></span>
    <span class="w-[77px] border border-[#dadada] bg-linear-to-b from-[#fbfbfb] to-[#f0f0f0] pl-px">层高:2.15m</span>
    <span class="w-[97px] border border-[#dadada] bg-linear-to-b from-[#fbfbfb] to-[#f0f0f0] pl-px">底标高:-2.2m</span>
    <span class="w-[48px] border border-[#dadada] bg-linear-to-b from-[#fbfbfb] to-[#f0f0f0] pl-px">0</span>
    <span class="flex-1 border border-[#dadada] bg-linear-to-b from-[#fbfbfb] to-[#f0f0f0] pl-px">名称在当前层当前构件类型下不允许重名</span>
    <span class="w-[70px] border border-[#dadada] bg-linear-to-b from-[#fbfbfb] to-[#f0f0f0]">375.2 FPS</span>
</div>

<!-- taskbar -->
<footer class="h-10 shrink-0 flex items-stretch bg-[#010b0e] text-white">
    <button aria-label="开始" class="w-12 bg-black flex items-center justify-center"><svg class="size-4" viewBox="0 0 16 16"><path d="M0 2.300l6.500-.9v6.100H0zM7.300 1.300L16 0v7.500H7.300zM0 8.300h6.500v6.200L0 13.600zM7.300 8.300H16V16l-8.700-1.300z" fill="#fff"/></svg></button>
    <label class="w-[336px] bg-[#333] flex items-center pl-2 pr-[5px]">
        <svg class="size-6 shrink-0" viewBox="0 0 24 24"><circle cx="12" cy="12" r="9" fill="none" stroke="#fff" stroke-width="3"/></svg>
        <input type="text" aria-label="搜索" placeholder="在这里输入你要搜索的内容" class="flex-1 min-w-0 ml-1 text-sm placeholder-[#a0a0a0] outline-none">
        <svg class="size-4 shrink-0" viewBox="0 0 16 16"><rect x="5.500" y=".5" width="5" height="9" rx="1" fill="none" stroke="#aaa"/><path d="M3.500 7v4.500h9V7M8 12v3.500M5 15.500h6" fill="none" stroke="#aaa"/></svg>
    </label>
    <div class="flex pl-[7px]">
        <button aria-label="任务视图" class="w-[51px] flex items-center justify-center"><svg class="w-5 h-4" viewBox="0 0 20 16"><path d="M4.500 1.500h11v13h-11zM3 3.500H.5v9H3M17 3.500h2.500v9H17" fill="none" stroke="#fff"/></svg></button>
        <button aria-label="应用" class="w-[51px] flex items-center justify-center"><svg class="size-6" viewBox="0 0 24 24"><path d="M12 12Q14 6 11 2 8 1 5 2 1 4 1.500 7 2 11 5 11.500 9 12 12 12zM12 12q6 2 10-1 1-3 0-6-2-4-5-3.500-4 .5-4.500 3.500-.5 4-.5 7zM12 12q-2 6 1 10 3 1 6 0 4-2 3.500-5-.5-4-3.500-4.500-4-.5-7-.5zM12 12q-6-2-10 1-1 3 0 6 2 4 5 3.500 4-.5 4.500-3.500.5-4 .5-7z" fill="#e8e8e8" stroke="#111" stroke-width=".8"/></svg></button>
        <button aria-label="浏览器" class="w-[51px] flex items-center justify-center"><svg class="size-6" viewBox="0 0 24 24"><path d="M19 15q-2 5-7 4.500-6-1-6-7T12 6q7 0 7 7H7" fill="none" stroke="#eee" stroke-width="4"/><path d="M4 23Q-1 18 9 8T22 2" fill="none" stroke="#eee" stroke-width="2"/></svg></button>
        <button aria-label="音乐" class="w-[51px] flex items-center justify-center"><svg class="w-7 h-6 mb-1" viewBox="0 0 28 24"><path d="M17 10A8 8 0 1 0 16 20M15 13a5 5 0 1 0-4 6q4 0 4-4t-4-3M13 5Q4 2 2 11t6 11" fill="none" stroke="#ddd" stroke-width="1.400"/><path d="M21 0q4 1 4 6l2 4H15l2-4q0-5 4-6z" fill="#f0b400"/><circle cx="21" cy="11.500" r="1.500" fill="#f0b400"/></svg></button>
        <button aria-label="Edge" class="w-[51px] flex items-center justify-center"><svg class="size-6" viewBox="0 0 24 24"><path d="M2 11Q3 2 12 2q10 1 10 11H9q0 5 6 5 3 0 6-1.500v4Q18 22 14 22 4 22 5 13q1-4 5-6-6 0-8 4zM9.500 10H16q0-4-3-4t-3.500 4z" fill="#0f78d8" fill-rule="evenodd"/></svg></button>
        <button aria-label="IE" class="w-[50px] flex items-center justify-center"><svg class="size-6" viewBox="0 0 24 24"><path d="M20 15q-2 5-7 4.500-6-1-6-7T13 6q7 0 7 7H8" fill="none" stroke="#4ab4f0" stroke-width="4"/><path d="M4 23Q-1 18 9 8T22 2q1 2-1 5" fill="none" stroke="#f4c430" stroke-width="2"/></svg></button>
        <button aria-label="文件资源管理器" class="w-12 flex items-center justify-center"><svg class="size-6" viewBox="0 0 24 24"><path d="M1 3h8l2 2h12v16H1z" fill="#ffdf85"/><path d="M1 3h8l2 2H1z" fill="#e8a820"/><path d="M5 21v-7q0-1 1-1h12q1 0 1 1v7h-4v-4H9v4z" fill="#36a9e0"/></svg></button>
        <button aria-label="广联达G+" class="w-12 px-1"><span class="flex h-full items-center justify-center border-b-2 border-[#76b9ed]"><svg class="size-6" viewBox="0 0 24 24"><path d="M23 2q-2 6-8 5-6-1-6 5 0 5 4 5 3 0 4-3h-5v-3h10q1 11-9 12Q2 22 1 12 1 3 10 2q4 0 7 1.500 3 0 6-1.500z" fill="url(#gG)"/></svg></span></button>
        <button aria-label="GGJ2013" class="w-12 flex items-center justify-center bg-[#30393d] border-b-2 border-[#76b9ed]"><svg class="size-6"><use href="#i-logo"/></svg></button>
        <button aria-label="记事" class="w-12 px-1"><span class="flex h-full items-center justify-center border-b-2 border-[#76b9ed]"><svg class="size-6" viewBox="0 0 24 24"><path d="M1 1h22v22H1z" fill="#f59a1c"/><path d="M3 5l12-2 4 3v13l-14 2z" fill="#fff4dc"/><path d="M6 9l8-1M6 12l8-1M7 15l6-1" stroke="#c08030"/><path d="M22 3l-9 12-1 4 3-2 9-12z" fill="#a84818"/></svg></span></button>
        <button aria-label="360浏览器" class="w-12 px-1"><span class="flex h-full items-center justify-center border-b-2 border-[#76b9ed]"><svg class="size-6" viewBox="0 0 24 24"><circle cx="12" cy="12" r="10.500" fill="#4cb82c"/><path d="M18 15q-2 4-6 3.500-5-1-5-6T12 7q6 0 6 5.500H8" fill="none" stroke="#fff" stroke-width="3"/><path d="M3 22Q-1 16 9 7T23 2" fill="none" stroke="#8ae060" stroke-width="1.500"/></svg></span></button>
    </div>
    <div class="flex-1 flex items-center justify-end">
        <span class="mr-[19px]">链接</span>
        <span class="w-[49px] mr-[18px] text-center leading-[18px]">17%<br>CPU使用</span>
        <svg class="w-3 h-[7px] mr-[10px]" viewBox="0 0 12 7"><path d="M.5 6.500L6 1l5.500 5.500" fill="none" stroke="#fff" stroke-width="1.300"/></svg>
        <svg class="w-4 h-3 mr-[9px]" viewBox="0 0 16 12"><path d="M5.500 3.500h9v7h-9V8M15.500 5.500v3M1 1v3h4V1M0 1.500h6M3 4v4h3" fill="none" stroke="#fff"/><path d="M8 5h5v4H8z" fill="#fff"/></svg>
        <svg class="size-4 mr-2" viewBox="0 0 16 16"><path d="M3 15Q4 5 13 3M6 15q0-6 7-8M9 15q0-3 4-4" fill="none" stroke="#ddd"/><path d="M1 13Q3 3 12 1" fill="none" stroke="#777"/><circle cx="12" cy="14" r="1.500" fill="#fff"/></svg>
        <svg class="w-4 h-4 mr-2" viewBox="0 0 16 16"><path d="M.5 5.500h3l3.500-3.500v12l-3.500-3.500h-3zM9 5.500q2 2.500 0 5M11 4q3 4 0 8" fill="none" stroke="#fff"/><path d="M13 2.500q4 5.500 0 11" fill="none" stroke="#888"/></svg>
        <svg class="w-[23px] h-[13px] mr-[10px]" viewBox="0 0 23 13"><path d="M.5.500h22v12H.5z" fill="none" stroke="#fff"/><path d="M3 3.500h17M3 6.500h17" stroke="#fff" stroke-dasharray="1 1"/><path d="M3 9.500h2M6 9.500h11M18 9.500h2" stroke="#fff"/></svg>
        <b class="mr-[14px] text-[13px]">中</b>
        <svg class="size-4 mr-[17px]" viewBox="0 0 16 16"><path d="M1 2l13-1 1 13-13 1z" fill="#f04a1a"/><path d="M12 4.500Q5 3 5 6t6 3q1 3-7 2.500" fill="none" stroke="#fff" stroke-width="2"/></svg>
        <time class="w-[60px] mr-[18px] text-center leading-[18px]">16:00<br>2018/3/21</time>
        <svg class="size-4 mr-5" viewBox="0 0 16 16"><path d="M.5 1.500h15v11H11L8 15l-2.500-2.500h-5z" fill="none" stroke="#fff"/></svg>
        <span class="w-px h-full bg-[#555] mr-1"></span>
    </div>
</footer>

<!-- input method bar floating over the title -->
<div class="absolute left-[767px] top-[3px] w-[183px] h-6 bg-[#fdfeff] border border-[#a9bdd3] flex items-center gap-[7px] pl-[9px] text-[#1f78d0]">
    <svg class="absolute -left-[25px] -top-[4px] w-[30px] h-7" viewBox="0 0 30 28"><path d="M2 6Q2 4 4 4L23 0q2 0 3 2l3 20q0 2-2 2L9 27q-3 0-3-2z" fill="#f0501e"/><path d="M23 6Q9 5 9 10q1 3 7 3 7 0 5 4-3 4-12 3" fill="none" stroke="#fff" stroke-width="4"/></svg>
    <b class="text-[15px]">中</b>
    <svg class="size-4" viewBox="0 0 16 16"><circle cx="5" cy="6" r="2" fill="none" stroke="#1f78d0" stroke-width="1.500"/><path d="M11 8a2 2 0 1 1 1 4l-2 2q2-3 1-6z" fill="#1f78d0"/></svg>
    <svg class="size-4" viewBox="0 0 16 16"><circle cx="8" cy="8" r="7" fill="none" stroke="#1f78d0" stroke-width="1.500"/><path d="M4 9q4 6 8 0z" fill="#1f78d0"/><path d="M5.500 4.500v2.500M10.500 4.500v2.500" stroke="#1f78d0" stroke-width="1.500"/></svg>
    <svg class="size-4" viewBox="0 0 16 16"><rect x="5" y="0" width="6" height="10" rx="3" fill="#1f78d0"/><path d="M3 7q0 5 5 5t5-5M8 12v3M5 15.300h6" fill="none" stroke="#1f78d0" stroke-width="1.400"/></svg>
    <svg class="size-4" viewBox="0 0 16 16"><path d="M.7 2.700h14.600v11H.7z" fill="none" stroke="#1f78d0" stroke-width="1.300"/><path d="M2.500 5.500h11M2.500 8.500h11" stroke="#1f78d0" stroke-width="1.500" stroke-dasharray="2 1"/><path d="M4 11.500h8" stroke="#1f78d0" stroke-width="1.500"/></svg>
    <svg class="size-4" viewBox="0 0 16 16"><circle cx="6" cy="4" r="3.500" fill="#a8b8cc"/><path d="M0 13q0-5 6-5 3 0 4 1v4z" fill="#a8b8cc"/><path d="M7 9h3v2H7.500v3H10M12 9h3v2h-2.500v3H15" stroke="#8898b0" stroke-width="1.200" fill="none"/></svg>
    <svg class="size-4 -ml-1" viewBox="0 0 16 16"><path d="M5 2q3 2 6 0l4 3-2 4-1.500-1v7h-7V8L3 9 1 5z" fill="#1f78d0"/></svg>
    <svg class="size-4 -mr-2" viewBox="0 0 16 16"><path d="M15 4l-3 3-2.500-.5L9 4l3-3Q8 0 6.500 3q-.5 2 0 3.500L1 12q-.5 2 1 3 1 1 2.500 0l5-5.500Q13 10 14.500 8q1-2 .5-4z" fill="#1f78d0"/></svg>
</div>
<div class="absolute left-[1113px] -top-[28px] size-12 rounded-full border-2 border-[#c8ccc8] bg-[#3cc058] shadow-[inset_0_0_0_1px_#208040,0_1px_4px_#999] flex items-end justify-center pb-[3px] text-white text-xs leading-4 font-bold">67</div>

<script>
    // [group, [[icon, label], ...]]
    const modules = [
        ['柱', [['t-col', '框柱(Z)'], ['t-col', '暗柱(Z)'], ['t-col', '端柱(Z)'], ['t-puz', '构造柱(Z)']]],
        ['墙', [['t-wall', '剪力墙(Q)'], ['t-ibar', '人防门框墙(RF)'], ['t-brick', '砌体墙(Q)'], ['t-prism', '暗梁(A)'], ['t-rebar', '砌体加筋(Y)']]],
        ['门窗洞', [['t-door', '门(M)'], ['t-win', '窗(C)'], ['t-dw', '门联窗(A)'], ['t-hole', '墙洞(D)'], ['t-ibar', '壁龛(I)'], ['t-beam', '连梁(G)'], ['t-lint', '过梁(G)'], ['t-band', '带形洞'], ['t-bwin', '带形窗']]],
        ['梁', [['t-liang', '梁(L)'], ['t-ring', '圈梁(E)']]],
        ['板', [['t-slab', '现浇板(B)'], ['t-spir', '螺旋板(B)'], ['t-cap', '柱帽(V)'], ['t-shole', '板洞(N)'], ['t-slab', '板受力筋(S)']]]
    ];
    document.getElementById('moduleTree').innerHTML = modules.map(([group, items]) => `
        <li class="h-4 flex items-center"><svg class="w-[11px] h-2 ml-[5px] shrink-0"><use href="#i-chev"/></svg><span class="w-[6px] border-t border-dotted border-[#808080]"></span><svg class="w-4 h-[14px] shrink-0"><use href="#t-folder"/></svg><span class="ml-[5px]">${group}</span></li>
        ${items.map(([icon, label], i) => `
        <li class="h-4 flex">
            <span class="w-[19px] ml-[11px] shrink-0 border-l border-dotted border-[#808080]"></span>
            ${i < items.length - 1
                ? '<span class="w-[12px] shrink-0 border-l border-dotted border-[#808080]"><span class="block h-2 border-b border-dotted border-[#808080]"></span></span>'
                : '<span class="w-[12px] h-2 shrink-0 border-l border-b border-dotted border-[#808080]"></span>'}
            <span class="${label === '框柱(Z)' ? 'flex bg-[#d9d9d9] pr-[5px]' : 'flex'}"><svg class="size-4 shrink-0"><use href="#${icon}"/></svg><span class="ml-1">${label}</span></span>
        </li>`).join('')}`).join('');

    const names = [];
    for (let n = 22; n <= 42; n++) names.push('KZ-' + n);
    names.push('AZ-34-1', 'AZ-7-1', 'AZ-7-1-1');
    for (let n = 43; n <= 52; n++) names.push('KZ-' + n);
    document.getElementById('componentList').innerHTML = names.map(name => `
        <li class="h-4 flex">
            ${name !== 'KZ-52'
                ? '<span class="w-2 shrink-0 border-l border-dotted border-[#808080]"><span class="block h-2 border-b border-dotted border-[#808080]"></span></span>'
                : '<span class="w-2 h-2 shrink-0 border-l border-b border-dotted border-[#808080]"></span>'}
            <span class="${name === 'KZ-52' ? 'flex items-center bg-[#316ac5] pl-1 pr-1' : 'flex items-center pl-1'}"><svg class="size-[11px]"><use href="#i-gear"/></svg><span class="ml-[7px]">${name}</span></span>
        </li>`).join('');

    // [row number, label, colour class, expandable]
    const props = [
        [1, '名称', 'text-white', 0], [2, '类别', 'text-[#0000ff]', 0], [3, '截面编辑', 'text-[#0000ff]', 0], [4, '截面形状', 'text-black', 0],
        [5, '截面宽(B边)(mm)', 'text-[#808080]', 0], [6, '截面高(H边)(mm)', 'text-[#808080]', 0], [7, '全部纵筋', 'text-[#808080]', 0],
        [8, '其它箍筋', 'text-[#0000ff]', 0], [9, '备注', 'text-black', 0], [10, '芯柱', 'text-[#808080]', 1], [15, '其它属性', 'text-[#808080]', 1],
        [27, '锚固搭接', 'text-[#808080]', 1], [42, '显示样式', 'text-[#808080]', 1]
    ];
    document.getElementById('propRows').innerHTML = props.map(([no, label, color, more]) => `
        <tr class="h-[19px] border-b border-[#bbb]">
            <td class="${no === 1 ? 'border-r border-[#bbb] text-center bg-[#fdd08a] text-[#600030]' : 'border-r border-[#bbb] text-center bg-[#f7f7f7]'}">${no}</td>
            <td class="${no === 1 ? 'bg-[#0078d7]' : ''}"><span class="flex items-center"><span class="w-5 pl-[2px]">${more ? '<svg class="size-[13px]" viewBox="0 0 13 13"><path d="M.5.5h12v12H.5z" fill="#fff" stroke="#aaa"/><path d="M3 6.500h7M6.500 3v7" stroke="#000"/></svg>' : ''}</span><span class="${color}">${label}</span></span></td>
        </tr>`).join('');

    // drawing grid, one line each 45 units across and 90 down
    let grid = '';
    for (let x = 628; x <= 1078; x += 45) {
        grid += `<path d="M${x}.5 246V666" stroke="${x === 853 ? '#606060' : (x === 628 || x === 1078 ? '#484848' : '#303030')}" stroke-dasharray="10 3 4 3"/>`;
    }
    [303, 393, 484, 574, 664].forEach(y => {
        grid += `<path d="M600 ${y}.5H1108" stroke="${y === 484 ? '#606060' : '#303030'}" stroke-dasharray="10 3 4 3"/>`;
    });
    document.getElementById('gridLines').innerHTML = grid;
</script>
</body>
</html>
